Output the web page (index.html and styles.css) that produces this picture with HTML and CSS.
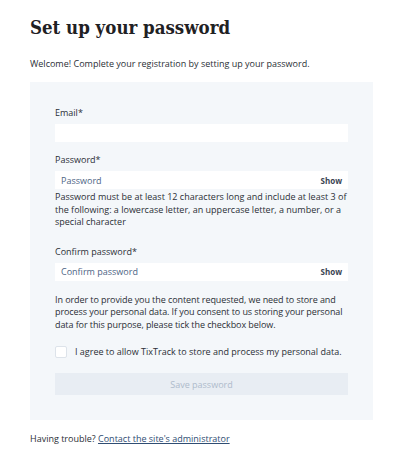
FILE: index.html
```html
<!DOCTYPE html>
<html lang="en">
<head>
    <meta charset="UTF-8">
    <meta name="viewport" content="width=device-width, initial-scale=1.0">
    <title>Set up your password</title>
    <link rel="stylesheet" href="styles.css">
</head>
<body>
    <main class="page">
        <h1 class="title">Set up your password</h1>
        <p class="intro">Welcome! Complete your registration by setting up your password.</p>

        <form class="panel" id="setupForm">
            <label class="field-label" for="email">Email*</label>
            <input class="field" type="email" id="email" name="email">

            <label class="field-label" for="password">Password*</label>
            <div class="field secret">
                <input type="password" id="password" name="password" placeholder="Password">
                <button type="button" class="show-btn">Show</button>
            </div>
            <p class="hint">Password must be at least 12 characters long and include at least 3 of the following: a lowercase letter, an uppercase letter, a number, or a special character</p>

            <label class="field-label" for="confirm">Confirm password*</label>
            <div class="field secret">
                <input type="password" id="confirm" name="confirm" placeholder="Confirm password">
                <button type="button" class="show-btn">Show</button>
            </div>

            <p class="consent">In order to provide you the content requested, we need to store and process your personal data. If you consent to us storing your personal data for this purpose, please tick the checkbox below.</p>

            <label class="agree">
                <input type="checkbox" name="agree">
                <span class="box"></span>
                <span>I agree to allow TixTrack to store and process my personal data.</span>
            </label>

            <button type="submit" class="save" disabled>Save password</button>
        </form>

        <p class="trouble">Having trouble? <a href="#">Contact the site's administrator</a></p>
    </main>
</body>
</html>
```

FILE: styles.css
```css
body {
    margin: 0;
    background-color: #fff;
    color: #2b2f36;
    font-family: "Open Sans", "DejaVu Sans", sans-serif;
    font-size: 9px;
}
.page {
    padding: 14px 32px 0 30px;
}
.title {
    margin: 0;
    font-family: "DejaVu Serif Condensed", "DejaVu Serif", serif;
    font-stretch: condensed;
    font-size: 18.5px;
    font-weight: bold;
    line-height: 28px;
    color: #1f2124;
}
.intro {
    margin: 16px 0 12px;
    line-height: 12px;
}
.panel {
    display: flex;
    flex-direction: column;
    background-color: #f4f7fa;
    padding: 24px 25px 25px;
}
.field-label {
    display: block;
    line-height: 14px;
    margin-bottom: 4px;
}
.field {
    box-sizing: border-box;
    height: 18px;
    border: none;
    background-color: #fff;
    margin-bottom: 11px;
    font: inherit;
    padding: 0 6px;
}
.secret {
    display: flex;
    align-items: center;
    margin-bottom: 2px;
}
.secret input {
    flex: 1;
    border: none;
    outline: none;
    background: none;
    padding: 0;
    font: inherit;
}
.secret input::placeholder {
    color: #4d6585;
}
.show-btn {
    border: none;
    background: none;
    padding: 0;
    font: inherit;
    font-size: 8px;
    font-weight: bold;
    color: #3a4352;
}
.hint {
    margin: 0 0 16px;
    line-height: 12.5px;
}
.consent {
    margin: 11px 0 14px;
    line-height: 12.5px;
    letter-spacing: -0.08px;
}
.agree {
    display: flex;
    align-items: center;
    gap: 8px;
    margin-bottom: 15px;
}
.agree input {
    display: none;
}
.box {
    box-sizing: border-box;
    width: 12px;
    height: 12px;
    background-color: #fff;
    border: 1px solid #dde3ea;
    border-radius: 2px;
}
.save {
    height: 22px;
    border: none;
    background-color: #e8edf3;
    color: #aebbcb;
    font: inherit;
}
.trouble {
    margin: 13px 0 0;
    line-height: 12px;
}
.trouble a {
    color: #2f4d73;
}
```
